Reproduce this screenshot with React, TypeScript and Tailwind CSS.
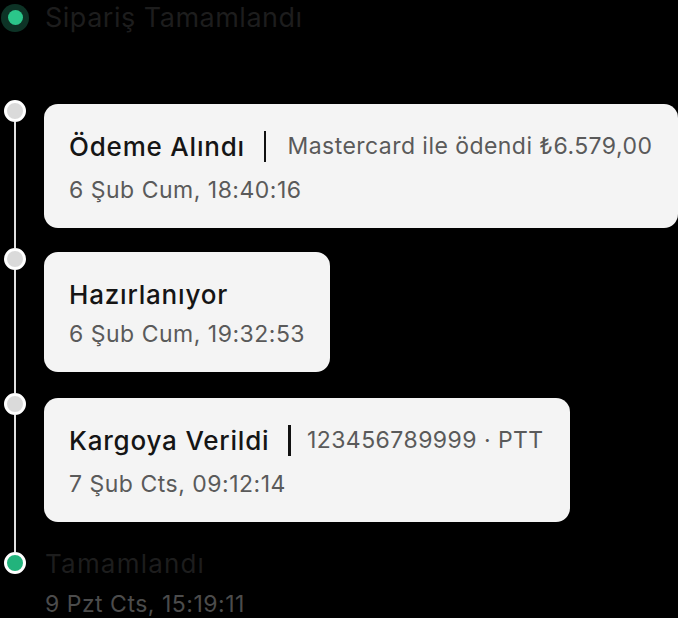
import React from "react";

const font = { fontFamily: "Inter, 'Noto Sans', sans-serif" };

function GreyDot() {
  return <div className="w-[22px] h-[22px] rounded-full bg-[#dadada] border-[3px] border-white shrink-0" />;
}

function Line() {
  return <div className="w-[2px] flex-1 bg-[#e2e2e2]" />;
}

export default function App() {
  return (
    <div className="w-[678px] h-[618px] bg-black overflow-hidden whitespace-nowrap" style={font}>
      {/* header */}
      <div className="flex items-center h-[35px]">
        <div className="w-[30px] flex justify-center">
          <div className="w-[28px] h-[28px] rounded-full bg-[#0d3326] flex items-center justify-center">
            <div className="w-[15px] h-[15px] rounded-full bg-[#2bc68a]" />
          </div>
        </div>
        <div className="ml-[15px] text-[27px] leading-[30px] tracking-[0.5px] text-[#1d1d1d]">Sipariş Tamamlandı</div>
      </div>

      <div className="h-[65px]" />

      {/* item 1 */}
      <div className="flex">
        <div className="w-[30px] flex flex-col items-center">
          <GreyDot />
          <Line />
        </div>
        <div className="pl-[14px] pt-[4px] pb-[20px]">
          <div className="w-[634px] h-[124px] rounded-[14px] bg-[#f4f4f4] px-[25px] pt-[25px]">
            <div className="flex items-center h-[34px]">
              <span className="text-[26px] font-medium text-[#151515] tracking-[0.8px]">Ödeme Alındı</span>
              <span className="w-[2.5px] h-[31px] bg-[#111111] ml-[19px] mr-[21px]" />
              <span className="text-[23px] tracking-[0.45px] text-[#5a5a5a]">Mastercard ile ödendi ₺6.579,00</span>
            </div>
            <div className="mt-[12px] text-[23px] leading-[30px] tracking-[0.5px] text-[#5a5a5a]">6 Şub Cum, 18:40:16</div>
          </div>
        </div>
      </div>

      {/* item 2 */}
      <div className="flex">
        <div className="w-[30px] flex flex-col items-center">
          <GreyDot />
          <Line />
        </div>
        <div className="pl-[14px] pt-[4px] pb-[21px]">
          <div className="w-[286px] h-[120px] rounded-[14px] bg-[#f4f4f4] px-[25px] pt-[27px]">
            <div className="flex items-center h-[30px]">
              <span className="text-[26px] font-medium text-[#151515] tracking-[0.8px]">Hazırlanıyor</span>
            </div>
            <div className="mt-[10px] text-[23px] leading-[30px] tracking-[0.5px] text-[#5a5a5a]">6 Şub Cum, 19:32:53</div>
          </div>
        </div>
      </div>

      {/* item 3 */}
      <div className="flex">
        <div className="w-[30px] flex flex-col items-center">
          <GreyDot />
          <Line />
        </div>
        <div className="pl-[14px] pt-[5px] pb-[30px]">
          <div className="w-[526px] h-[124px] rounded-[14px] bg-[#f4f4f4] px-[25px] pt-[25px]">
            <div className="flex items-center h-[34px]">
              <span className="text-[26px] font-medium text-[#151515] tracking-[0.8px]">Kargoya Verildi</span>
              <span className="w-[2.5px] h-[31px] bg-[#111111] ml-[19px] mr-[16px]" />
              <span className="text-[23px] tracking-[0.45px] text-[#5a5a5a]">123456789999 · PTT</span>
            </div>
            <div className="mt-[12px] text-[23px] leading-[30px] tracking-[0.5px] text-[#5a5a5a]">7 Şub Cts, 09:12:14</div>
          </div>
        </div>
      </div>

      {/* item 4 */}
      <div className="flex">
        <div className="w-[30px] flex flex-col items-center">
          <div className="w-[22px] h-[22px] rounded-full bg-[#22b37c] border-[3px] border-white shrink-0" />
        </div>
        <div className="pl-[15px]">
          <div className="text-[26px] leading-[24px] tracking-[1.2px] text-[#1d1d1d]">Tamamlandı</div>
          <div className="mt-[14px] text-[23px] leading-[28px] tracking-[0.5px] text-[#4c4c4c]">9 Pzt Cts, 15:19:11</div>
        </div>
      </div>
    </div>
  );
}
